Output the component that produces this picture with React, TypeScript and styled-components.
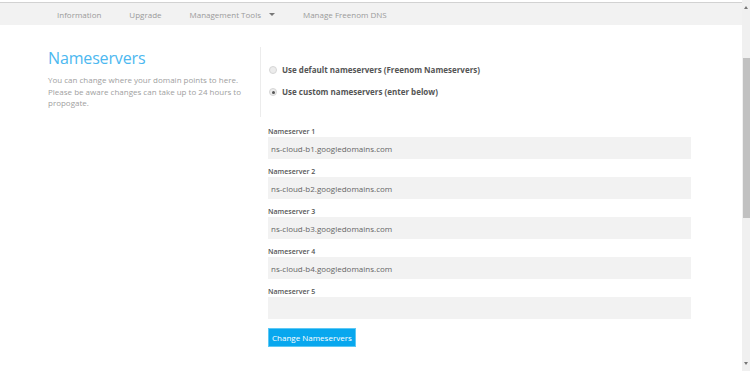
import styled, { createGlobalStyle } from 'styled-components'

const GlobalStyle = createGlobalStyle`
  html, body {
    margin: 0;
    padding: 0;
    background: #ffffff;
    font-family: "Open Sans", "Liberation Sans", sans-serif;
  }
`;

// --- Styled Components ---

const Page = styled.div`
  display: flex;
  width: 750px;
  height: 371px;
  overflow: hidden;
`;

const Main = styled.div`
  flex: 1;
  display: flex;
  flex-direction: column;
  padding-top: 2px;
`;

const NavBar = styled.nav`
  height: 22px;
  background: #f2f2f2;
  border-top: 1px solid #d2d2d2;
  display: flex;
  align-items: center;
  padding-left: 57px;
`;

const NavItem = styled.span`
  font-size: 8px;
  color: #9a9a9a;
  margin-right: 28px;
  display: flex;
  align-items: center;
  gap: 8px;
`;

const Caret = styled.span`
  width: 0;
  height: 0;
  border-left: 3px solid transparent;
  border-right: 3px solid transparent;
  border-top: 3px solid #777;
`;

const Content = styled.div`
  display: flex;
  padding: 22px 0 0 48px;
`;

const Intro = styled.div`
  width: 212px;
  flex-shrink: 0;
`;

const Title = styled.h1`
  margin: 0;
  font-size: 16px;
  font-weight: 400;
  color: #4cb8f0;
  line-height: 22px;
  letter-spacing: -0.15px;
`;

const Description = styled.p`
  margin: 5px 0 0;
  font-size: 8px;
  line-height: 11.5px;
  color: #a0a0a0;
  width: 200px;
`;

const FormColumn = styled.div`
  flex: 1;
  display: flex;
  flex-direction: column;
`;

const RadioGroup = styled.div`
  border-left: 1px solid #ececec;
  height: 70px;
  padding: 17px 0 0 8px;
  box-sizing: border-box;
  display: flex;
  flex-direction: column;
  gap: 10px;
`;

const RadioRow = styled.label`
  display: flex;
  align-items: center;
  gap: 5px;
  font-size: 8px;
  font-weight: 700;
  color: #555;
  line-height: 12px;
`;

const RadioDot = styled.span<{ $checked?: boolean }>`
  width: 6px;
  height: 6px;
  border-radius: 50%;
  border: 1px solid #d6d6d6;
  background: #ececec;
  display: flex;
  align-items: center;
  justify-content: center;

  &::after {
    content: '';
    width: 3px;
    height: 3px;
    border-radius: 50%;
    background: ${props => props.$checked ? '#555' : 'transparent'};
  }
`;

const Fields = styled.div`
  display: flex;
  flex-direction: column;
  gap: 8px;
  padding: 10px 0 0 8px;
  width: 423px;
`;

const Field = styled.div`
  display: flex;
  flex-direction: column;
`;

const FieldLabel = styled.span`
  font-size: 7px;
  font-weight: 600;
  color: #555;
  line-height: 10px;
`;

const FieldInput = styled.div`
  height: 22px;
  background: #f2f2f2;
  padding-left: 3px;
  display: flex;
  align-items: center;
  font-size: 8px;
  color: #666;
`;

const SubmitButton = styled.button`
  align-self: flex-start;
  margin-top: 1px;
  height: 19px;
  padding: 0 3px;
  background: #08a7ee;
  border: 1px solid #5cc8f5;
  color: #ffffff;
  font-family: "Open Sans", "Liberation Sans", sans-serif;
  font-size: 8px;
`;

const Scrollbar = styled.div`
  width: 8px;
  background: #f0f0f0;
  display: flex;
  flex-direction: column;
  align-items: center;
`;

const Arrow = styled.span<{ $down?: boolean }>`
  width: 0;
  height: 0;
  margin: 6px 0;
  border-left: 2.5px solid transparent;
  border-right: 2.5px solid transparent;
  ${props => props.$down ? 'border-top: 3px solid #777;' : 'border-bottom: 3px solid #777;'}
`;

const Thumb = styled.div`
  width: 7px;
  height: 160px;
  margin-top: 43px;
  background: #c1c1c1;
`;

const Spacer = styled.div`
  flex: 1;
`;

const servers = [
  'ns-cloud-b1.googledomains.com',
  'ns-cloud-b2.googledomains.com',
  'ns-cloud-b3.googledomains.com',
  'ns-cloud-b4.googledomains.com',
  '',
]

export default function App() {
  return (
    <>
      <GlobalStyle />
      <Page>
        <Main>
          <NavBar>
            <NavItem>Information</NavItem>
            <NavItem>Upgrade</NavItem>
            <NavItem>
              Management Tools
              <Caret />
            </NavItem>
            <NavItem>Manage Freenom DNS</NavItem>
          </NavBar>
          <Content>
            <Intro>
              <Title>Nameservers</Title>
              <Description>
                You can change where your domain points to here. Please be aware changes can take up to 24 hours to propogate.
              </Description>
            </Intro>
            <FormColumn>
              <RadioGroup>
                <RadioRow>
                  <RadioDot />
                  Use default nameservers (Freenom Nameservers)
                </RadioRow>
                <RadioRow>
                  <RadioDot $checked />
                  Use custom nameservers (enter below)
                </RadioRow>
              </RadioGroup>
              <Fields>
                {servers.map((s, i) => (
                  <Field key={i}>
                    <FieldLabel>Nameserver {i + 1}</FieldLabel>
                    <FieldInput>{s}</FieldInput>
                  </Field>
                ))}
                <SubmitButton type="button">Change Nameservers</SubmitButton>
              </Fields>
            </FormColumn>
          </Content>
        </Main>
        <Scrollbar>
          <Arrow />
          <Thumb />
          <Spacer />
          <Arrow $down />
        </Scrollbar>
      </Page>
    </>
  )
}
